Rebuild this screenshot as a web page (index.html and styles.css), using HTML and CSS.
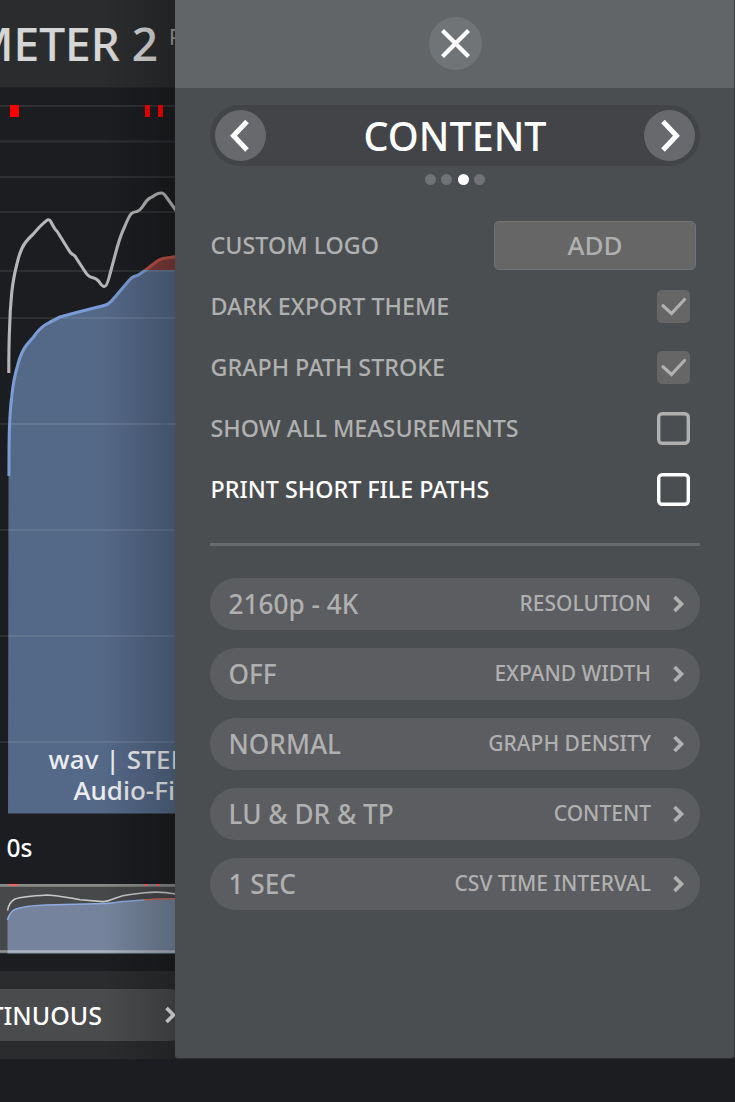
FILE: index.html
```html
<!DOCTYPE html>
<html lang="en">
<head>
<meta charset="utf-8">
<title>Meter 2</title>
<link rel="stylesheet" href="styles.css">
</head>
<body>
<div class="app">
  <main class="meter">
    <header class="meter-head"><h1 class="meter-title">METER 2</h1><sup class="meter-tag">PRO</sup></header>
    <section class="graph">
      <svg class="graph-art" viewBox="0 88 176 727" width="176" height="727">
        <defs>
          <clipPath id="over"><rect x="0" y="88" width="176" height="182"/></clipPath>
          <clipPath id="under"><rect x="0" y="270" width="176" height="545"/></clipPath>
          <path id="loud" d="M9 476C9 455 9 445 9.3 433Q10 410 11.7 397Q13.500 379 17.500 366Q21 352 26.500 345Q30 341 33.500 337Q39 329 45 325Q52 321 60 317Q67 315 76.500 312.500L98 307Q105 305.500 108 304Q111 302 115 297L129 280.500Q131.500 277.500 134 276.500Q138 275.500 140 274L147 269L156 262Q159 259.500 163 258.500L177 256.500"/>
        </defs>
        <g clip-path="url(#under)"><path d="M8.500 476L9.300 433Q10 410 11.700 397Q13.500 379 17.500 366Q21 352 26.500 345L33.500 337Q39 329 45 325Q52 321 60 317L76.500 312.500L98 307Q105 305.500 108 304Q111 302 115 297L129 280.500Q131.500 277.500 140 274L147 269H177V813.500H8Z" fill="#546887"/></g>
        <path clip-path="url(#over)" d="M144 271L156 262Q159 259.500 163 258.500L177 256.500V271Z" fill="#7d3b38"/>
        <path class="grid" d="M0 106H176M0 141.500H176M0 177H176M0 212H176M0 271H176M0 318H176M0 424H176M0 530H176M0 636H176M0 742H176"/>
        <use href="#loud" class="line" stroke="#7a9bd4" clip-path="url(#under)"/>
        <use href="#loud" class="line" stroke="#bb5247" clip-path="url(#over)"/>
        <path class="line" stroke="#b6b6b6" d="M8.800 373Q8.800 345 9.500 330Q10 310 11.700 293Q13.500 277 16.700 265Q20 250 25 243Q28 239 33.300 234L39 227.500Q45 221.500 47.500 220Q49.500 219 51 222Q53 226 55 229Q58 232 60 236L69 250.500Q70.500 253.500 73 254.500Q75.500 256 76.500 258.500L85 271.500Q88.500 277 92 277.500Q96 278 99 281.500Q102 286.500 104.500 286.500Q107 286.500 110 274L117 248Q121 234 125 226Q129 216 131.500 213.500Q133 212 137 211.500Q140 210.500 143 206Q147 199.500 150 198Q152 197.500 155 195Q158 193 161.500 193Q164 193 167 198L176 210.500"/>
        <path fill="#f00" d="M10 105h9v12h-9zM145 105h5v12h-5zM158 105h5v12h-5z"/>
      </svg>
      <div class="graph-note"><span class="note-file">wav | STEREO</span><span class="note-name">Audio-File</span></div>
    </section>
    <div class="time">0s</div>
    <section class="overview">
      <svg viewBox="0 883 176 72" width="176" height="72">
        <path fill="#47484a" d="M0 884h176v69.500H0z"/>
        <path d="M7.500 920Q10 911 16 909Q24 906 45 905L105 903.500L135 900.500L176 898.500V953.500H7.500Z" fill="#75849c"/>
        <path fill="#898989" d="M0 884h176v2.800H0z"/>
        <path d="M0 951.500H176" stroke="#fff" stroke-opacity=".4" stroke-width="2.600"/>
        <path d="M7.500 920Q10 911 16 909Q24 906 45 905L105 903.500Q110 903.300 120 901.700Q135 900.500 145 900" class="thin" stroke="#8eaae0"/>
        <path d="M144 900Q160 898.500 176 898.700" class="thin" stroke="#c46c5d"/>
        <path d="M7.500 910.500Q9 902 15 899Q22 896.500 47 895Q65 896.500 80 899.800L103 901.600Q108 901.500 113 899Q123 895 132 894.200L145 892.700Q160 891 176 894" class="thin" stroke="#c8c8c8"/>
        <path fill="#ff5c5c" d="M9 884h9v1.700h-9zM144 884h4v1.700h-4zM156 884h4v1.700h-4z"/>
      </svg>
    </section>
    <footer class="mode-bar">
      <div class="mode"><span class="mode-name">CONTINUOUS</span><svg class="mode-arrow" viewBox="0 0 12 18" width="12" height="18"><path d="M1.500 2L8.500 9L1.500 16"/></svg></div>
    </footer>
  </main>

  <aside class="drawer">
    <header class="drawer-head">
      <button class="round close"><svg viewBox="0 0 53 53" width="53" height="53"><path d="M13.500 13.500L39.500 39.500M39.500 13.500L13.500 39.500"/></svg></button>
    </header>
    <div class="drawer-body">
      <nav class="pager">
        <button class="round step"><svg viewBox="0 0 51 51" width="51" height="51"><path d="M32 11.500L18.500 25.700L32 40"/></svg></button>
        <h2 class="pager-title">CONTENT</h2>
        <button class="round step"><svg viewBox="0 0 51 51" width="51" height="51"><path d="M19 11.500L32.500 25.700L19 40"/></svg></button>
      </nav>
      <div class="dots"><i></i><i></i><i class="on"></i><i></i></div>
      <div class="options">
        <div class="option"><span class="name">CUSTOM LOGO</span><button class="add">ADD</button></div>
        <div class="option"><span class="name">DARK EXPORT THEME</span><span class="check filled"><svg viewBox="0 0 33 33" width="33" height="33"><path d="M6 15.800L14.500 23.500L27.500 9.500"/></svg></span></div>
        <div class="option"><span class="name">GRAPH PATH STROKE</span><span class="check filled"><svg viewBox="0 0 33 33" width="33" height="33"><path d="M6 15.800L14.500 23.500L27.500 9.500"/></svg></span></div>
        <div class="option"><span class="name">SHOW ALL MEASUREMENTS</span><span class="check"><svg viewBox="0 0 33 33" width="33" height="33"><rect x="1.700" y="1.700" width="29.600" height="29.600" rx="3.500"/></svg></span></div>
        <div class="option active"><span class="name">PRINT SHORT FILE PATHS</span><span class="check"><svg viewBox="0 0 33 33" width="33" height="33"><rect x="1.700" y="1.700" width="29.600" height="29.600" rx="3.500"/></svg></span></div>
      </div>
      <div class="rule"></div>
      <div class="selects">
        <div class="select"><span class="value">2160p - 4K</span><span class="label">RESOLUTION</span><svg viewBox="0 0 12 18" width="12" height="18"><path d="M1.500 2L8.500 9L1.500 16"/></svg></div>
        <div class="select"><span class="value">OFF</span><span class="label">EXPAND WIDTH</span><svg viewBox="0 0 12 18" width="12" height="18"><path d="M1.500 2L8.500 9L1.500 16"/></svg></div>
        <div class="select"><span class="value">NORMAL</span><span class="label">GRAPH DENSITY</span><svg viewBox="0 0 12 18" width="12" height="18"><path d="M1.500 2L8.500 9L1.500 16"/></svg></div>
        <div class="select"><span class="value">LU &amp; DR &amp; TP</span><span class="label">CONTENT</span><svg viewBox="0 0 12 18" width="12" height="18"><path d="M1.500 2L8.500 9L1.500 16"/></svg></div>
        <div class="select"><span class="value">1 SEC</span><span class="label">CSV TIME INTERVAL</span><svg viewBox="0 0 12 18" width="12" height="18"><path d="M1.500 2L8.500 9L1.500 16"/></svg></div>
      </div>
    </div>
  </aside>
</div>
</body>
</html>
```
FILE: styles.css
```css
* { box-sizing: border-box; }
body { margin: 0; background: #1c1d20; font-family: "Noto Sans", "Open Sans", sans-serif; font-weight: 500; }
h1, h2 { margin: 0; font-weight: 500; }
button { border: 0; padding: 0; font: inherit; color: inherit; }
svg { display: block; fill: none; }
.app { position: relative; width: 735px; height: 1102px; overflow: hidden; background: #1c1d20; }

.meter { width: 176px; height: 1059px; overflow: hidden; display: flex; flex-direction: column; position: relative; white-space: nowrap; }
.meter::after { content: ""; position: absolute; inset: 0 0 0 103px; background: linear-gradient(90deg, rgba(0,0,0,0), rgba(0,0,0,.22)); }
.meter-head { flex: none; height: 88px; background: #2b2c2e; border-bottom: 1px solid #242527; display: flex; align-items: flex-start; width: 400px; }
.meter-title { font-size: 46px; line-height: 60px; color: #d6d6d6; margin: 13px 0 0 -36px; width: 194px; display: flex; justify-content: flex-end; -webkit-text-stroke: .2px #d6d6d6; }
.meter-tag { font-size: 21px; line-height: 20px; color: #a0a0a0; margin: 27px 0 0 11px; font-weight: 400; }
.graph { flex: none; height: 727px; display: grid; }
.graph > * { grid-area: 1 / 1; }
.grid { stroke: #fff; stroke-opacity: .085; stroke-width: 1.8; }
.line { fill: none; stroke-width: 3.1; stroke-linejoin: round; }
.thin { stroke-width: 1.6; }
.graph-note { align-self: end; display: flex; flex-direction: column; font-size: 26px; line-height: 31px; color: #ebedf0; padding-bottom: 9px; width: 300px; }
.note-file { padding-left: 48.500px; letter-spacing: .15px; }
.note-name { padding-left: 73.500px; }
.time { flex: none; height: 68px; padding: 16px 0 0 6.500px; font-size: 24.500px; line-height: 34px; color: #fff; }
.overview { flex: none; height: 72px; }
.mode-bar { flex: none; height: 104px; margin-top: 16px; padding-top: 18px; background: #2b2c2d; }
.mode { height: 52px; width: 194px; background: #4a4b4c; border-radius: 0 26px 26px 0; display: flex; align-items: center; color: #fff; font-size: 25px; }
.mode-name { width: 102px; display: flex; justify-content: flex-end; flex: none; }
.mode-arrow { margin-left: 63px; stroke: #eee; stroke-width: 3.6; }

.drawer { position: absolute; left: 175px; top: 0; width: 559px; height: 1058px; background: #4a4e50; border-radius: 0 0 3px 3px; color: #b0b0b0; box-shadow: 0 1px 0 #2d2e30, 1px 0 0 #393d40; }
.drawer-head { height: 88px; background: #616567; display: flex; justify-content: center; padding: 17px 0 0 1px; }
.round { border-radius: 50%; display: block; }
.close { width: 53px; height: 53px; background: #707476; }
.close path { stroke: #fff; stroke-width: 4.2; }
.drawer-body { padding: 17px 34px 0 35px; }
.pager { height: 61px; border-radius: 31px; background: #434448; display: flex; align-items: center; justify-content: space-between; padding: 0 5px; }
.step { width: 51px; height: 51px; background: #68696d; }
.step path { stroke: #fff; stroke-width: 5; }
.pager-title { font-size: 39.500px; line-height: 60px; color: #fff; }
.dots { display: flex; justify-content: center; gap: 5.600px; padding-top: 8px; height: 19px; }
.dots i { width: 11px; height: 11px; border-radius: 50%; background: #707276; }
.dots .on { background: #fff; }
.options { padding-top: 30px; font-size: 23.300px; }
.option { height: 61px; display: flex; align-items: center; justify-content: space-between; padding: 0 10px 0 .500px; white-space: nowrap; }
.name { padding-bottom: 2px; }
.add { width: 202px; height: 49px; margin-right: -6px; padding-bottom: 2px; border: 1px solid #727272; border-radius: 5px; background: #666; font-size: 26px; }
.check { width: 33px; height: 33px; border-radius: 5px; }
.check rect { stroke: currentColor; stroke-width: 3.400; }
.filled { background: #666; }
.filled path { stroke: #b0b0b0; stroke-width: 3.200; stroke-linecap: round; }
.active { color: #fff; }
.rule { height: 3px; margin-top: 23px; background: #68696c; }
.selects { display: flex; flex-direction: column; gap: 18px; padding-top: 32px; }
.select { height: 52px; border-radius: 26px; background: #5c5d60; display: flex; align-items: center; padding: 0 15px 0 18.500px; }
.value { font-size: 26.200px; flex: 1; }
.label { font-size: 21px; margin-right: 22px; padding-bottom: 2px; }
.select svg { stroke: #b0b0b0; stroke-width: 3.700; }
```
